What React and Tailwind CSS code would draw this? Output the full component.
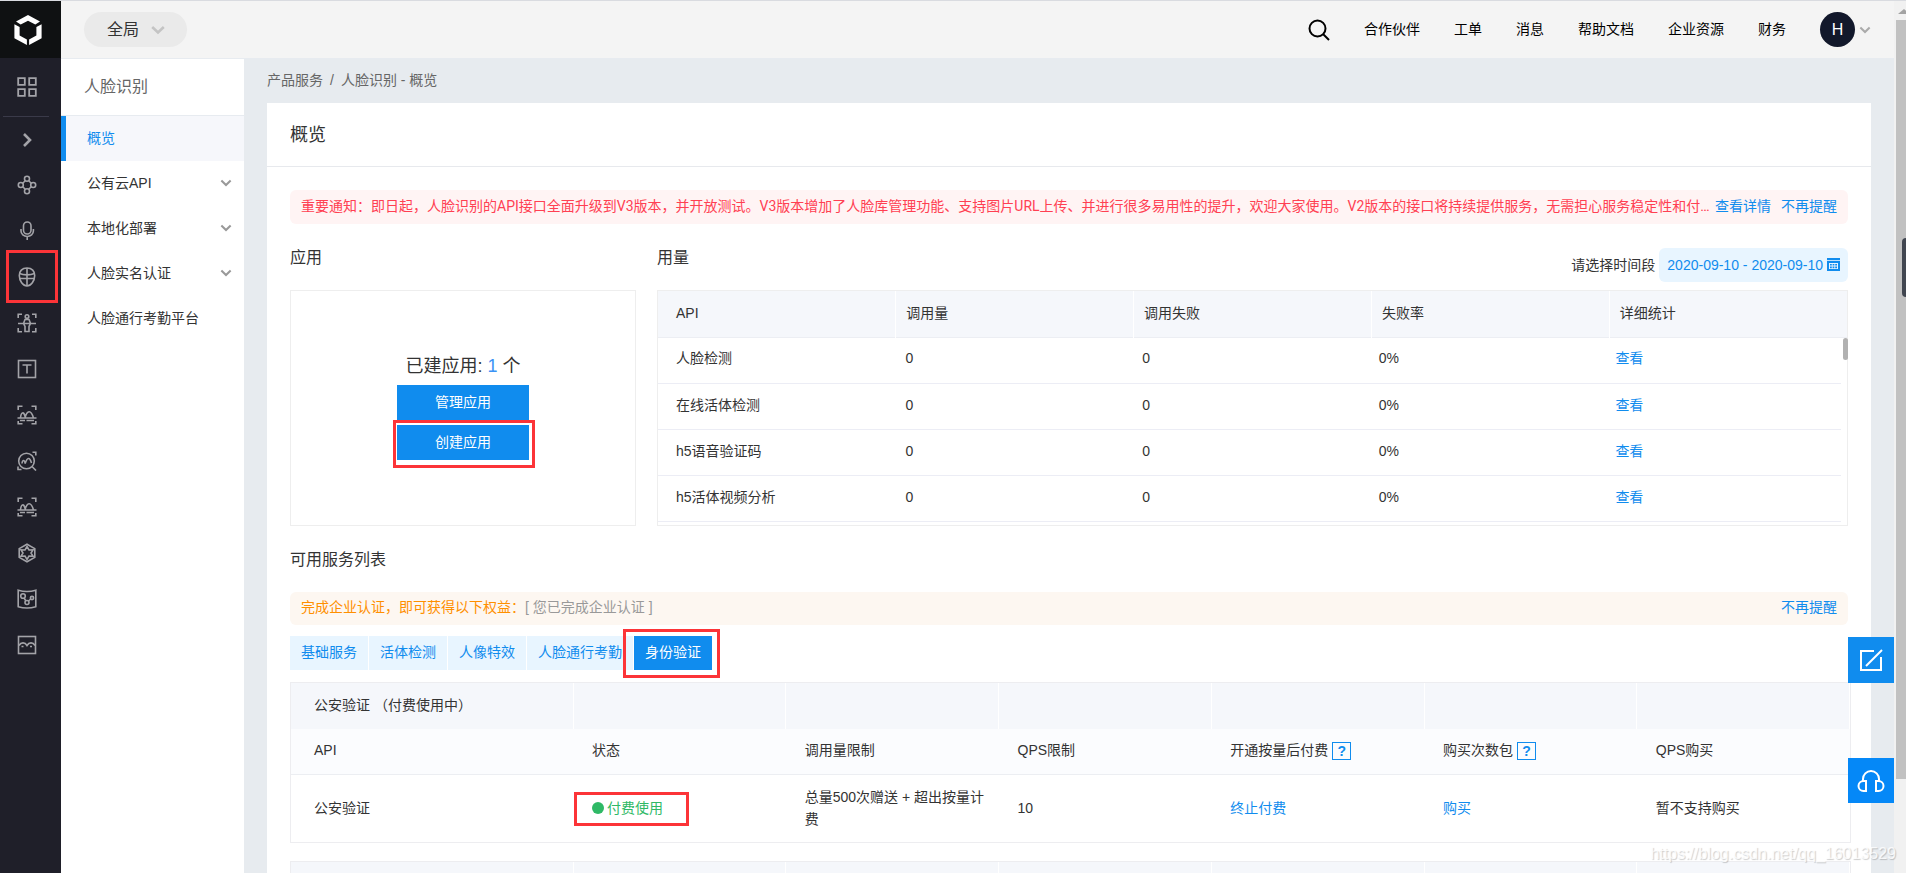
import React from "react";

const RAIL = {
  nodes: (
    <>
      <circle cx="10" cy="3.800" r="2.500" />
      <circle cx="10" cy="16.200" r="2.500" />
      <circle cx="3.800" cy="10" r="2.500" />
      <circle cx="16.200" cy="10" r="2.500" />
      <path d="M8.200 5.800 5.800 8.200M11.800 5.800l2.400 2.400M8.200 14.200l-2.400-2.400M11.800 14.200l2.400-2.400" />
    </>
  ),
  mic: (
    <>
      <rect x="6.500" y="1" width="7.500" height="12" rx="3.700" />
      <path d="M4 8v2a6.200 5.500 0 0 0 12.400 0V8M10.200 15.500V19" />
    </>
  ),
  face: (
    <>
      <path d="M10 1C5 1 2.300 4 2.300 8.500 2.300 14 6 19 10 19s7.700-5 7.700-10.500C17.700 4 15 1 10 1z" />
      <path d="M10 1v18M2.600 6.500c4 1.800 10.800 1.800 14.800 0M3 11.500h14" />
    </>
  ),
  body: (
    <>
      <path d="M1.200 5V1.200H5M15 1.200h3.800V5M18.800 15v3.800H15M5 18.800H1.200V15" />
      <circle cx="10" cy="3.500" r="1.800" />
      <path d="M1 10.500h18M8 6.500h4l1.500 4-1.500 3v5H8v-5l-1.500-3z" />
    </>
  ),
  text: (
    <>
      <rect x="1.500" y="1.500" width="17" height="17" />
      <path d="M5.500 6h9M10 6v8.500" />
    </>
  ),
  image: (
    <>
      <path d="M1.200 5V1.200H5.500M14.500 1.200h4.300V5M18.800 16v2.800h-4.300M5.500 18.800H1.200V16" />
      <path d="M.5 13h19M3.500 13c.5-6.500 3.500-6.500 4.500-1.500M8 13c2-8 6-8.500 8.500 0M3 15.500h5M9.500 15.500h7.500" />
    </>
  ),
  search: (
    <>
      <circle cx="9.500" cy="10" r="7.800" />
      <path d="m15 15.500 4 4M5 12.500c.5-4 2.500-4 3.200 0 2-6.500 4.500-6.500 6.300-.5M15.500 1.200h3.300V4.500M1 15.500v3h3.500" />
    </>
  ),
  hex: (
    <>
      <path d="m10 1.200 7.800 4.400v8.800L10 18.800l-7.800-4.400V5.600z" />
      <path d="m10 3.500 2 3.500 4-.2-2 3.200 2 3.200-4-.2-2 3.500L8 13l-4 .2L6 10 4 6.800 8 7z" />
    </>
  ),
  map: (
    <>
      <path d="M1.200 1.200c5 1.500 12.600 1.500 17.600 0v16.500c-5 1.500-12.600 1.500-17.600 0z" />
      <circle cx="6" cy="7" r="2.300" />
      <circle cx="10" cy="13.500" r="2" />
      <circle cx="15" cy="9" r="1.600" />
      <path d="m7 9 2 3M11.300 12l2.500-2" />
    </>
  ),
  photo: (
    <>
      <rect x="1.500" y="1.500" width="17" height="17" />
      <path d="M2 10.500c2-3.500 6-3.500 8 0 2-3.500 6-3.500 8 0M4.500 11.500h2M13 11.500h2" />
    </>
  ),
};

const RAIL_ITEMS = [
  ["nodes", "知识图谱"],
  ["mic", "语音技术"],
  ["face", "人脸识别"],
  ["body", "人体分析"],
  ["text", "文字识别"],
  ["image", "图像识别"],
  ["search", "图像搜索"],
  ["image", "图像审核"],
  ["hex", "增强现实"],
  ["map", "智能地图"],
  ["photo", "图像增强"],
];

function Icon({ children, className = "size-5", width = 1.6 }) {
  return (
    <svg
      viewBox="0 0 20 20"
      className={className}
      fill="none"
      stroke="currentColor"
      strokeWidth={width}
      aria-hidden="true"
    >
      {children}
    </svg>
  );
}

function Chevron({ className }) {
  return (
    <svg
      viewBox="0 0 14 10"
      className={className}
      fill="none"
      stroke="currentColor"
      strokeWidth="2.600"
      aria-hidden="true"
    >
      <path d="m1.200 2 5.800 5.500L12.800 2" />
    </svg>
  );
}

function Mark({ className }) {
  return (
    <span
      className={`pointer-events-none absolute border-3 border-[#fc3438] ${className}`}
      aria-hidden="true"
    />
  );
}

function Rail() {
  return (
    <nav className="flex w-[61px] shrink-0 flex-col bg-[#1f1f29] text-[#a3a3a8]">
      <a
        href="#home"
        aria-label="首页"
        className="flex h-[57px] items-center justify-center bg-[#0f1112] pr-1.5 text-white"
      >
        <svg viewBox="0 0 28 30" className="h-[30px] w-7" fill="currentColor" aria-hidden="true">
          <path d="M14 0 26 6.500 21.300 9.600 14 5.800 6.700 9.600 2 6.500z" />
          <path d="M.4 9.200 5.600 12v8.500L12.900 24.500V30L.4 23.200z" />
          <path d="M27.600 9.200 22.400 12v8.500L15.100 24.500V30l12.500-6.800z" />
        </svg>
      </a>
      <a href="#all" aria-label="全部产品" className="flex h-[58px] items-center pl-[17px]">
        <Icon width={1.8}>
          <path d="M1.200 1.200h6.600v6.600H1.200zM12.200 1.200h6.600v6.600h-6.600zM1.200 12.200h6.600v6.600H1.200zM12.200 12.200h6.600v6.600h-6.600z" />
        </Icon>
      </a>
      <hr className="ml-[3px] w-[46px] border-[#3a3a49]" />
      <button type="button" aria-label="展开" className="flex h-[45px] items-center pl-[17px]">
        <Icon width={2.6}>
          <path d="m7 4 6 6-6 6" />
        </Icon>
      </button>
      {RAIL_ITEMS.map(([icon, label]) => (
        <a
          key={label}
          href={`#${icon}`}
          aria-label={label}
          className="relative flex h-[46px] items-center pl-[17px]"
        >
          <Icon>{RAIL[icon]}</Icon>
          {icon === "face" && <Mark className="-top-1 left-1.5 h-[53px] w-[52px]" />}
        </a>
      ))}
    </nav>
  );
}

function Header() {
  return (
    <header className="flex h-[58px] items-center justify-between border-b border-[#e7ebf0] bg-[#f4f4f4] px-[23px]">
      <button
        type="button"
        className="flex h-[35px] w-[103px] items-center gap-3 rounded-full bg-[#eaeaea] pl-[23px] text-base text-[#333]"
      >
        全局
        <Chevron className="h-2.5 w-3.5 text-[#c4c4c4]" />
      </button>
      <div className="flex items-center gap-[34px] text-sm text-black">
        <button type="button" aria-label="搜索">
          <svg
            viewBox="0 0 22 22"
            className="size-[22px]"
            fill="none"
            stroke="currentColor"
            strokeWidth="2"
            aria-hidden="true"
          >
            <circle cx="9.500" cy="9.500" r="8" />
            <path d="m15 15 6 6" />
          </svg>
        </button>
        {["合作伙伴", "工单", "消息", "帮助文档", "企业资源", "财务"].map((t) => (
          <a key={t} href={`#${t}`} className="pb-0.5">
            {t}
          </a>
        ))}
        <button type="button" aria-label="账户" className="flex items-center gap-1">
          <span className="flex size-[35px] items-center justify-center rounded-full bg-[#12182b] text-base text-white">
            H
          </span>
          <Chevron className="h-2 w-3 text-[#aaa]" />
        </button>
      </div>
    </header>
  );
}

function Sidebar() {
  return (
    <aside className="w-[183px] shrink-0 bg-white text-sm text-[#333]">
      <h2 className="flex h-[57px] items-center border-b border-[#e7ebf0] pl-[23px] text-base text-[#666]">
        人脸识别
      </h2>
      <a
        href="#overview"
        className="flex h-[45px] items-center border-l-5 border-[#108cee] bg-[#f6f7fb] pb-0.5 pl-[21px] text-[#108cee]"
      >
        概览
      </a>
      {["公有云API", "本地化部署", "人脸实名认证"].map((t) => (
        <button
          key={t}
          type="button"
          className="flex h-[45px] w-full items-center justify-between pb-0.5 pl-[26px] pr-3"
        >
          {t}
          <Chevron className="h-2 w-3 text-[#999]" />
        </button>
      ))}
      <a href="#attendance" className="flex h-[45px] items-center pb-0.5 pl-[26px]">
        人脸通行考勤平台
      </a>
    </aside>
  );
}

function Usage() {
  const rows = ["人脸检测", "在线活体检测", "h5语音验证码", "h5活体视频分析"];
  return (
    <div className="relative h-[236px] border border-[#eee]">
      <table className="w-full table-fixed text-left text-sm">
        <thead>
          <tr className="h-[46px] border-b border-[#eceef3] bg-[#f5f7fb]">
            {["API", "调用量", "调用失败", "失败率", "详细统计"].map((t) => (
              <th
                key={t}
                scope="col"
                className="border-r border-white pb-0.5 pl-2.5 font-normal first:pl-[18px] last:border-0"
              >
                {t}
              </th>
            ))}
          </tr>
        </thead>
      </table>
      <div className="pr-1.5">
        <table className="w-full table-fixed text-left text-sm" aria-label="用量">
          <tbody>
            {rows.map((name) => (
              <tr key={name} className="h-[46px] border-b border-[#ecedf5]">
                <td className="pb-1 pl-[18px]">{name}</td>
                <td className="pb-1 pl-[11px]">0</td>
                <td className="pb-1 pl-[11px]">0</td>
                <td className="pb-1 pl-[11px]">0%</td>
                <td className="pb-1 pl-[11px]">
                  <a href="#detail" className="text-[#108cee]">
                    查看
                  </a>
                </td>
              </tr>
            ))}
          </tbody>
        </table>
      </div>
      <span className="absolute -right-px top-[47px] h-[22px] w-[5px] rounded-sm bg-[#b1b1b1]" />
    </div>
  );
}

function Help() {
  return (
    <button
      type="button"
      aria-label="说明"
      className="ml-1 inline-flex h-[18px] w-[19px] items-center justify-center border border-[#108cee] align-middle font-bold leading-none text-[#108cee]"
    >
      ?
    </button>
  );
}

function ServiceColumns() {
  return (
    <colgroup>
      <col className="w-[282px]" />
      <col />
      <col />
      <col />
      <col />
      <col />
      <col />
    </colgroup>
  );
}

function ServiceHead({ title }) {
  return (
    <tr className="h-[46px] bg-[#f5f7fb]">
      <th scope="col" className="border-r border-white pb-0.5 pl-[23px] font-normal">
        {title}
      </th>
      {[1, 2, 3, 4, 5, 6].map((n) => (
        <td key={n} className="border-r border-white" />
      ))}
    </tr>
  );
}

function Services() {
  const head = "pl-[19px] pb-0.5 font-normal";
  const cell = "pl-[19px] pr-2";
  return (
    <div className="-mr-[3px] mt-3 flex flex-col gap-[18px] text-sm">
      <div className="border border-[#ededf0]">
        <table className="w-full table-fixed text-left">
          <ServiceColumns />
          <tbody>
            <ServiceHead title="公安验证 （付费使用中）" />
            <tr className="h-[45px] border-b border-[#eceef2] bg-[#fbfcfe]">
              <th scope="col" className="pb-0.5 pl-[23px] font-normal">API</th>
              <th scope="col" className={head}>状态</th>
              <th scope="col" className={head}>调用量限制</th>
              <th scope="col" className={head}>QPS限制</th>
              <th scope="col" className={head}>
                开通按量后付费
                <Help />
              </th>
              <th scope="col" className={head}>
                购买次数包
                <Help />
              </th>
              <th scope="col" className={head}>QPS购买</th>
            </tr>
            <tr className="h-[68px] leading-[22px]">
              <td className="pl-[23px]">公安验证</td>
              <td className={cell}>
                <span className="relative inline-flex items-center gap-[3px] text-[#2fb966]">
                  <span className="size-3 rounded-full bg-[#2fb966]" />
                  付费使用
                  <Mark className="-left-[18px] -top-[5px] h-[34px] w-[115px]" />
                </span>
              </td>
              <td className={cell}>总量500次赠送 + 超出按量计费</td>
              <td className={cell}>10</td>
              <td className={cell}>
                <a href="#stop" className="text-[#108cee]">终止付费</a>
              </td>
              <td className={cell}>
                <a href="#buy" className="text-[#108cee]">购买</a>
              </td>
              <td className={cell}>暂不支持购买</td>
            </tr>
          </tbody>
        </table>
      </div>
      <div className="border border-[#ededf0]">
        <table className="w-full table-fixed text-left">
          <ServiceColumns />
          <tbody>
            <ServiceHead title="" />
          </tbody>
        </table>
      </div>
    </div>
  );
}

function Tabs() {
  return (
    <div role="tablist" className="mt-[11px] flex gap-px text-sm text-[#108cee]">
      {["基础服务", "活体检测", "人像特效", "人脸通行考勤"].map((t) => (
        <button
          key={t}
          type="button"
          role="tab"
          aria-selected="false"
          className="h-[34px] bg-[#e8f5ff] px-[11px] pb-0.5"
        >
          {t}
        </button>
      ))}
      <button
        type="button"
        role="tab"
        aria-selected="true"
        className="relative h-[34px] bg-[#108cee] px-[11px] pb-0.5 text-white"
      >
        身份验证
        <Mark className="-left-[11px] -top-[7px] h-[49px] w-[97px]" />
      </button>
    </div>
  );
}

function Overview() {
  return (
    <main className="min-w-0 flex-1 px-[23px] text-[#333]">
      <nav className="flex h-11 items-center gap-[7px] pb-0.5 text-sm text-[#666]" aria-label="路径">
        <a href="#products">产品服务</a>
        <span>/</span>
        <span>人脸识别 - 概览</span>
      </nav>
      <section className="bg-white">
        <h1 className="flex h-16 items-center border-b border-[#e7e9ed] px-[23px] text-lg">概览</h1>
        <div className="px-[23px] pb-6 pt-[23px]">
          <div className="flex min-h-[34px] items-center rounded-md bg-[#fff4f4] px-[11px] pb-0.5 text-sm text-[#ff4052]">
            <p className="min-w-0 flex-1 font-[Roboto,'Noto_Sans_CJK_SC',sans-serif]">
              重要通知：即日起，人脸识别的API接口全面升级到V3版本，并开放测试。V3版本增加了人脸库管理功能、支持图片URL上传、并进行很多易用性的提升，欢迎大家使用。V2版本的接口将持续提供服务，无需担心服务稳定性和付…
            </p>
            <a href="#notice" className="shrink-0 text-[#108cee]">查看详情</a>
            <button type="button" className="ml-2.5 shrink-0 text-[#108cee]">不再提醒</button>
          </div>

          <div className="flex gap-[21px] pt-6">
            <div className="w-[346px] shrink-0">
              <h3 className="h-[42px] text-base leading-5">应用</h3>
              <div className="flex h-[236px] flex-col items-center border border-[#eee] pt-[61px]">
                <p className="text-lg leading-[28px]">
                  已建应用: <span className="text-[#3a93f5]">1</span> 个
                </p>
                <button
                  type="button"
                  className="mt-[5px] h-[35px] w-[132px] shrink-0 bg-[#108cee] pb-0.5 text-sm text-white"
                >
                  管理应用
                </button>
                <button
                  type="button"
                  className="relative mt-[5px] h-[35px] w-[132px] shrink-0 bg-[#108cee] pb-0.5 text-sm text-white"
                >
                  创建应用
                  <Mark className="-left-1 -top-[5px] h-12 w-[142px]" />
                </button>
              </div>
            </div>
            <div className="min-w-0 flex-1">
              <div className="flex h-[42px] justify-between">
                <h3 className="text-base leading-5">用量</h3>
                <div className="flex h-[33px] items-center gap-1 text-sm">
                  <span id="range">请选择时间段</span>
                  <button
                    type="button"
                    aria-labelledby="range range-value"
                    className="flex h-[34px] items-center gap-1 rounded-md bg-[#e8f5ff] px-2 text-[#108cee]"
                  >
                    <span id="range-value">2020-09-10 - 2020-09-10</span>
                    <svg viewBox="0 0 13 13" className="size-[13px]" fill="currentColor" aria-hidden="true">
                      <path d="M0 0h13v2.200H0z" />
                      <path fillRule="evenodd" d="M0 3h13v10H0zM2 5v6h9V5z" />
                      <path d="M3 6h1.800v1.600H3zM5.600 6h1.800v1.600H5.600zM8.200 6H10v1.600H8.200zM3 8.600h1.800v1.600H3zM5.600 8.600h1.800v1.600H5.600zM8.200 8.600H10v1.600H8.200z" />
                    </svg>
                  </button>
                </div>
              </div>
              <Usage />
            </div>
          </div>

          <h3 className="pt-6 text-base leading-5">可用服务列表</h3>
          <div className="mt-[22px] flex h-[33px] items-center justify-between rounded-md bg-[#fdf7f1] px-[11px] pb-1 text-sm">
            <p className="text-[#ff8f00]">
              完成企业认证，即可获得以下权益：
              <span className="text-[#999]">[ 您已完成企业认证 ]</span>
            </p>
            <button type="button" className="text-[#108cee]">不再提醒</button>
          </div>
          <Tabs />
          <Services />
        </div>
      </section>
    </main>
  );
}

export default function App() {
  return (
    <div className="relative flex h-screen overflow-hidden border-t border-[#d9dbe0] bg-[#e7ebef] font-['Liberation_Sans','Noto_Sans_CJK_SC',sans-serif]">
      <Rail />
      <div className="flex min-w-0 flex-1 flex-col">
        <Header />
        <div className="flex min-h-0 flex-1">
          <Sidebar />
          <Overview />
        </div>
      </div>
      <div className="flex w-3 shrink-0 flex-col bg-[#f1f1f1] pl-0.5" aria-hidden="true">
        <svg viewBox="0 0 10 19" className="h-[19px] w-2.5 shrink-0" fill="#a3a3a3">
          <path d="M2 13 8 8l2 1.700V13z" />
        </svg>
        <span className="h-[759px] bg-[#c1c1c1]" />
      </div>

      <span className="absolute right-0 top-[237px] h-[59px] w-1 rounded-l-sm bg-[#414650]" />
      <button
        type="button"
        aria-label="反馈"
        className="absolute right-3 top-[636px] flex size-[46px] items-center justify-center bg-[#108cee] text-white"
      >
        <svg viewBox="0 0 24 24" className="size-6" fill="none" stroke="currentColor" strokeWidth="2" aria-hidden="true">
          <path d="M15 3H2v19h20V9" />
          <path d="M7 18 23 2" />
        </svg>
      </button>
      <button
        type="button"
        aria-label="客服"
        className="absolute right-3 top-[757px] flex h-[45px] w-[46px] items-center justify-center bg-[#0588f7] text-white"
      >
        <svg viewBox="0 0 28 24" className="h-6 w-7" fill="none" stroke="currentColor" strokeWidth="2" aria-hidden="true">
          <path d="M9 22V12H6.500a5 5 0 0 0 0 10zM19 22V12h2.500a5 5 0 0 1 0 10z" />
          <path d="M6 12v-2a8 8 0 0 1 16 0v2" />
        </svg>
      </button>
      <p className="absolute bottom-[7px] right-2.5 text-base text-white/80 [text-shadow:1px_1px_1px_rgba(0,0,0,0.2)]">
        https://blog.csdn.net/qq_16013529
      </p>
    </div>
  );
}
